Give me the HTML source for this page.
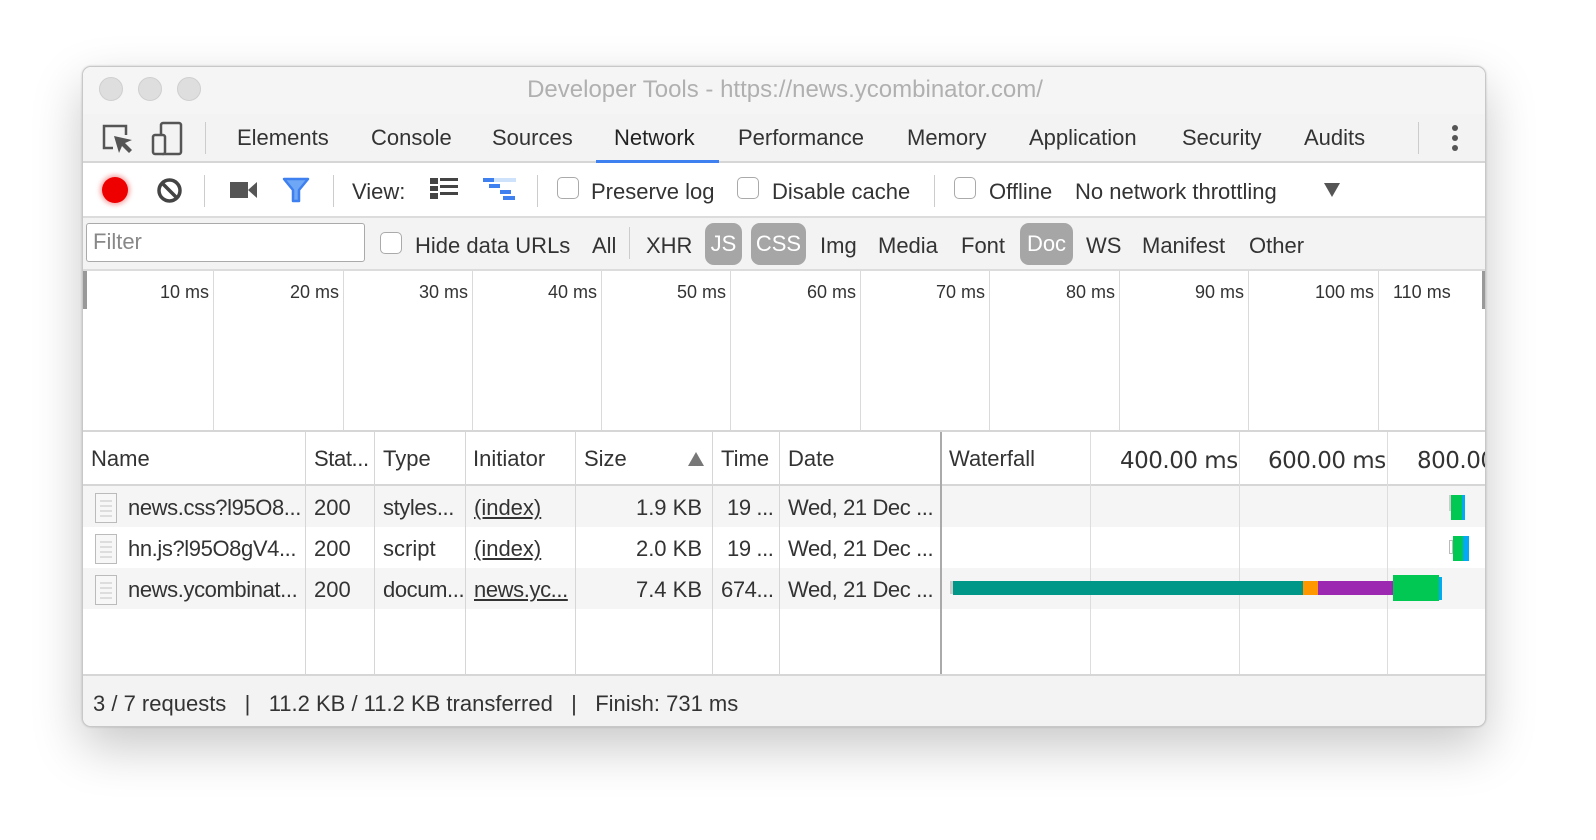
<!DOCTYPE html>
<html><head><meta charset="utf-8"><style>
*{box-sizing:border-box;margin:0;padding:0}
body{width:1596px;height:840px;background:#fff;font-family:"Liberation Sans",Arial,sans-serif;color:#333;position:relative;overflow:hidden}
.a{position:absolute;white-space:nowrap}
#win{position:absolute;left:82px;top:66px;width:1404px;height:661px;border-radius:9px;overflow:hidden;border:1px solid #c8c8c8;box-shadow:0 20px 50px rgba(0,0,0,.22),0 0 2px rgba(0,0,0,.2);background:#fff}
.t{font-size:22px;line-height:26px}
.r{letter-spacing:-0.4px}
.vl{position:absolute;width:1px;background:#dadada}
.dot{position:absolute;top:10px;width:24px;height:24px;border-radius:50%;background:#dedede;border:1px solid #cfcfcf}
.cb{position:absolute;width:22px;height:22px;border:1px solid #aaa;border-radius:5px;background:#fff}
.pill{position:absolute;top:156px;height:42px;border-radius:9px;background:#a6a6a6;color:#fff;font-size:22px;line-height:42px;text-align:center}
.fi{position:absolute;width:22px;height:30px;border:1px solid #bbb;background:#f7f7f7}
.fi i{position:absolute;left:4px;right:4px;height:2px;background:#ddd}
u{text-decoration:underline}
</style></head><body>
<div id="win">
 <div class="a" style="left:0;top:0;width:1404px;height:47px;background:#f5f5f5"></div>
 <div class="dot" style="left:16px"></div><div class="dot" style="left:55px"></div><div class="dot" style="left:94px"></div>
 <div class="a t" style="left:0;width:1404px;top:9px;text-align:center;color:#b0b0b0;font-size:24px;line-height:28px">Developer Tools - https://news.ycombinator.com/</div>
 <div class="a" style="left:0;top:47px;width:1404px;height:49px;background:#f3f3f3;border-bottom:2px solid #d6d6d6"></div>
 <svg class="a" style="left:18px;top:56px" width="34" height="34" viewBox="0 0 34 34"><path d="M12 25H3V3h22v9" fill="none" stroke="#555" stroke-width="2.5"/><path d="M13 13l5 17 3-7 7 7 3-3-7-7 7-3z" fill="#555"/></svg>
 <svg class="a" style="left:68px;top:54px" width="34" height="36" viewBox="0 0 34 36"><rect x="10" y="2" width="20" height="31" rx="2" fill="none" stroke="#555" stroke-width="2.5"/><rect x="2" y="14" width="12" height="19" rx="2" fill="#f3f3f3" stroke="#555" stroke-width="2.5"/></svg>
 <div class="vl" style="left:122px;top:55px;height:32px;background:#ccc"></div>
 <div class="a t" style="left:154px;top:58px">Elements</div>
 <div class="a t" style="left:288px;top:58px">Console</div>
 <div class="a t" style="left:409px;top:58px">Sources</div>
 <div class="a t" style="left:531px;top:58px;color:#222">Network</div>
 <div class="a" style="left:513px;top:93px;width:123px;height:3px;background:#3f80f0"></div>
 <div class="a t" style="left:655px;top:58px">Performance</div>
 <div class="a t" style="left:824px;top:58px">Memory</div>
 <div class="a t" style="left:946px;top:58px">Application</div>
 <div class="a t" style="left:1099px;top:58px">Security</div>
 <div class="a t" style="left:1221px;top:58px">Audits</div>
 <div class="vl" style="left:1335px;top:55px;height:32px;background:#ccc"></div>
 <div class="a" style="left:1369px;top:58px;width:6px;height:6px;border-radius:3px;background:#555;box-shadow:0 10px 0 #555,0 20px 0 #555"></div>
 <div class="a" style="left:19px;top:110px;width:26px;height:26px;border-radius:50%;background:#e00;box-shadow:0 0 5px 2px rgba(230,0,0,.35)"></div>
 <svg class="a" style="left:73px;top:110px" width="27" height="27" viewBox="0 0 27 27"><circle cx="13.5" cy="13.5" r="10.5" fill="none" stroke="#444" stroke-width="3.5"/><path d="M6 6l15 15" stroke="#444" stroke-width="3.5"/></svg>
 <div class="vl" style="left:121px;top:108px;height:32px;background:#ccc"></div>
 <svg class="a" style="left:147px;top:114px" width="27" height="18" viewBox="0 0 27 18"><rect x="0" y="1" width="18" height="16" fill="#555"/><path d="M18 9l9-8v16z" fill="#555"/></svg>
 <svg class="a" style="left:199px;top:110px" width="28" height="26" viewBox="0 0 28 26"><path d="M2 2h24l-9 11v11h-6V13z" fill="#6ea7f5" stroke="#3f80f0" stroke-width="2.5" stroke-linejoin="round"/></svg>
 <div class="vl" style="left:250px;top:108px;height:32px;background:#ccc"></div>
 <div class="a t" style="left:269px;top:112px">View:</div>
 <svg class="a" style="left:347px;top:111px" width="28" height="21" viewBox="0 0 28 21"><rect x="0" y="0" width="8" height="6" fill="#444"/><rect x="10" y="0" width="18" height="3" fill="#444"/><rect x="0" y="8" width="8" height="5" fill="#444"/><rect x="10" y="7" width="18" height="3" fill="#444"/><rect x="0" y="15" width="8" height="6" fill="#444"/><rect x="10" y="14" width="18" height="3" fill="#444"/></svg>
 <svg class="a" style="left:400px;top:111px" width="33" height="23" viewBox="0 0 33 23"><rect x="0" y="0" width="33" height="4" fill="#cfe2fb"/><rect x="0" y="0" width="11" height="4" fill="#3f80f0"/><rect x="6" y="6" width="11" height="4" fill="#3f80f0"/><rect x="17" y="12" width="11" height="4" fill="#3f80f0"/><rect x="20" y="18" width="12" height="4" fill="#3f80f0"/></svg>
 <div class="vl" style="left:454px;top:108px;height:32px;background:#ccc"></div>
 <div class="cb" style="left:474px;top:110px"></div>
 <div class="a t" style="left:508px;top:112px">Preserve log</div>
 <div class="cb" style="left:654px;top:110px"></div>
 <div class="a t" style="left:689px;top:112px">Disable cache</div>
 <div class="vl" style="left:851px;top:108px;height:32px;background:#ccc"></div>
 <div class="cb" style="left:871px;top:110px"></div>
 <div class="a t" style="left:906px;top:112px">Offline</div>
 <div class="a t" style="left:992px;top:112px">No network throttling</div>
 <svg class="a" style="left:1241px;top:116px" width="16" height="14" viewBox="0 0 16 14"><path d="M0 0h16L8 14z" fill="#555"/></svg>
 <div class="a" style="left:0;top:149px;width:1404px;height:55px;background:#f3f3f3;border-top:2px solid #dcdcdc;border-bottom:2px solid #dcdcdc"></div>
 <div class="a t" style="left:3px;top:156px;width:279px;height:39px;background:#fff;border:1px solid #aaa;border-radius:3px;padding:5px 6px;color:#888;font-size:22px;line-height:26px">Filter</div>
 <div class="cb" style="left:297px;top:165px"></div>
 <div class="a t" style="left:332px;top:166px">Hide data URLs</div>
 <div class="a t" style="left:509px;top:166px">All</div>
 <div class="vl" style="left:546px;top:160px;height:32px;background:#ccc"></div>
 <div class="a t" style="left:563px;top:166px">XHR</div>
 <div class="pill" style="left:622px;width:37px">JS</div>
 <div class="pill" style="left:668px;width:55px">CSS</div>
 <div class="a t" style="left:737px;top:166px">Img</div>
 <div class="a t" style="left:795px;top:166px">Media</div>
 <div class="a t" style="left:878px;top:166px">Font</div>
 <div class="pill" style="left:937px;width:53px">Doc</div>
 <div class="a t" style="left:1003px;top:166px">WS</div>
 <div class="a t" style="left:1059px;top:166px">Manifest</div>
 <div class="a t" style="left:1166px;top:166px">Other</div>
 <div class="a" style="left:0;top:204px;width:4px;height:38px;background:#999"></div>
 <div class="a" style="left:1399px;top:204px;width:4px;height:38px;background:#999"></div>
 <div class="a" style="left:0;top:363px;width:1404px;height:2px;background:#d6d6d6"></div>
 <div class="vl" style="left:130px;top:204px;height:159px"></div>
 <div class="vl" style="left:260px;top:204px;height:159px"></div>
 <div class="vl" style="left:389px;top:204px;height:159px"></div>
 <div class="vl" style="left:518px;top:204px;height:159px"></div>
 <div class="vl" style="left:647px;top:204px;height:159px"></div>
 <div class="vl" style="left:777px;top:204px;height:159px"></div>
 <div class="vl" style="left:906px;top:204px;height:159px"></div>
 <div class="vl" style="left:1036px;top:204px;height:159px"></div>
 <div class="vl" style="left:1165px;top:204px;height:159px"></div>
 <div class="vl" style="left:1295px;top:204px;height:159px"></div>
 <div class="a" style="left:0;top:214px;width:1404px;font-size:18px;line-height:22px">
  <span class="a" style="right:1278px">10 ms</span><span class="a" style="right:1148px">20 ms</span><span class="a" style="right:1019px">30 ms</span><span class="a" style="right:890px">40 ms</span><span class="a" style="right:761px">50 ms</span><span class="a" style="right:631px">60 ms</span><span class="a" style="right:502px">70 ms</span><span class="a" style="right:372px">80 ms</span><span class="a" style="right:243px">90 ms</span><span class="a" style="right:113px">100 ms</span><span class="a" style="left:1310px">110 ms</span>
 </div>
 <div class="a" style="left:0;top:417px;width:1404px;height:2px;background:#d6d6d6"></div>
 <div class="a" style="left:0;top:419px;width:1404px;height:41px;background:#f5f5f5"></div>
 <div class="a" style="left:0;top:501px;width:1404px;height:41px;background:#f5f5f5"></div>
 <div class="vl" style="left:222px;top:365px;height:242px;background:#d6d6d6"></div>
 <div class="vl" style="left:291px;top:365px;height:242px;background:#d6d6d6"></div>
 <div class="vl" style="left:382px;top:365px;height:242px;background:#d6d6d6"></div>
 <div class="vl" style="left:492px;top:365px;height:242px;background:#d6d6d6"></div>
 <div class="vl" style="left:629px;top:365px;height:242px;background:#d6d6d6"></div>
 <div class="vl" style="left:696px;top:365px;height:242px;background:#d6d6d6"></div>
 <div class="a" style="left:857px;top:365px;width:2px;height:242px;background:#aaa"></div>
 <div class="vl" style="left:1007px;top:365px;height:242px;background:#ddd"></div>
 <div class="vl" style="left:1156px;top:365px;height:242px;background:#ddd"></div>
 <div class="vl" style="left:1304px;top:365px;height:242px;background:#ddd"></div>
 <div class="a t" style="left:8px;top:379px">Name</div>
 <div class="a t r" style="left:231px;top:379px">Stat...</div>
 <div class="a t" style="left:300px;top:379px">Type</div>
 <div class="a t" style="left:390px;top:379px">Initiator</div>
 <div class="a t" style="left:501px;top:379px">Size</div>
 <svg class="a" style="left:605px;top:385px" width="16" height="14" viewBox="0 0 16 14"><path d="M8 0l8 14H0z" fill="#777"/></svg>
 <div class="a t" style="left:638px;top:379px">Time</div>
 <div class="a t" style="left:705px;top:379px">Date</div>
 <div class="a t" style="left:866px;top:379px">Waterfall</div>
 <div class="a t" style="left:1037px;top:381px;font-size:23px;font-family:'DejaVu Sans',sans-serif;letter-spacing:-.5px">400.00 ms</div>
 <div class="a t" style="left:1185px;top:381px;font-size:23px;font-family:'DejaVu Sans',sans-serif;letter-spacing:-.5px">600.00 ms</div>
 <div class="a t" style="left:1334px;top:381px;font-size:23px;font-family:'DejaVu Sans',sans-serif;letter-spacing:-.5px">800.00</div>
 <div class="fi" style="left:12px;top:426px"><i style="top:6px"></i><i style="top:11px"></i><i style="top:16px"></i><i style="top:21px"></i></div>
 <div class="fi" style="left:12px;top:467px"><i style="top:6px"></i><i style="top:11px"></i><i style="top:16px"></i><i style="top:21px"></i></div>
 <div class="fi" style="left:12px;top:508px"><i style="top:6px"></i><i style="top:11px"></i><i style="top:16px"></i><i style="top:21px"></i></div>
 <div class="a t r" style="left:45px;top:428px">news.css?l95O8...</div>
 <div class="a t r" style="left:45px;top:469px">hn.js?l95O8gV4...</div>
 <div class="a t r" style="left:45px;top:510px">news.ycombinat...</div>
 <div class="a t" style="left:231px;top:428px">200</div><div class="a t" style="left:231px;top:469px">200</div><div class="a t" style="left:231px;top:510px">200</div>
 <div class="a t r" style="left:300px;top:428px">styles...</div><div class="a t" style="left:300px;top:469px">script</div><div class="a t r" style="left:300px;top:510px">docum...</div>
 <div class="a t" style="left:391px;top:428px"><u>(index)</u></div><div class="a t" style="left:391px;top:469px"><u>(index)</u></div><div class="a t r" style="left:391px;top:510px"><u>news.yc...</u></div>
 <div class="a t" style="right:783px;top:428px">1.9 KB</div><div class="a t" style="right:783px;top:469px">2.0 KB</div><div class="a t" style="right:783px;top:510px">7.4 KB</div>
 <div class="a t r" style="left:644px;top:428px">19 ...</div><div class="a t r" style="left:644px;top:469px">19 ...</div><div class="a t r" style="left:638px;top:510px">674...</div>
 <div class="a t r" style="left:705px;top:428px">Wed, 21 Dec ...</div><div class="a t r" style="left:705px;top:469px">Wed, 21 Dec ...</div><div class="a t r" style="left:705px;top:510px">Wed, 21 Dec ...</div>
 <div class="a" style="left:1366px;top:428px;width:3px;height:16px;background:#ccc"></div>
 <div class="a" style="left:1368px;top:428px;width:11px;height:25px;background:#00c853"></div>
 <div class="a" style="left:1379px;top:428px;width:3px;height:25px;background:#03a9f4"></div>
 <div class="a" style="left:1366px;top:473px;width:4px;height:14px;border:1px solid #bbb"></div>
 <div class="a" style="left:1370px;top:469px;width:10px;height:25px;background:#00c853"></div>
 <div class="a" style="left:1380px;top:469px;width:6px;height:25px;background:#03a9f4"></div>
 <div class="a" style="left:867px;top:514px;width:3px;height:13px;background:#ccc"></div>
 <div class="a" style="left:870px;top:514px;width:350px;height:14px;background:#009688"></div>
 <div class="a" style="left:1220px;top:514px;width:15px;height:14px;background:#ff9800"></div>
 <div class="a" style="left:1235px;top:514px;width:75px;height:14px;background:#9c27b0"></div>
 <div class="a" style="left:1310px;top:508px;width:46px;height:26px;background:#00c853"></div>
 <div class="a" style="left:1356px;top:510px;width:3px;height:23px;background:#03a9f4"></div>
 <div class="a" style="left:0;top:607px;width:1404px;height:54px;background:#f3f3f3;border-top:2px solid #d6d6d6"></div>
 <div class="a t" style="left:10px;top:624px">3 / 7 requests &nbsp;&nbsp;|&nbsp;&nbsp; 11.2 KB / 11.2 KB transferred &nbsp;&nbsp;|&nbsp;&nbsp; Finish: 731 ms</div>
</div>
</body></html>
